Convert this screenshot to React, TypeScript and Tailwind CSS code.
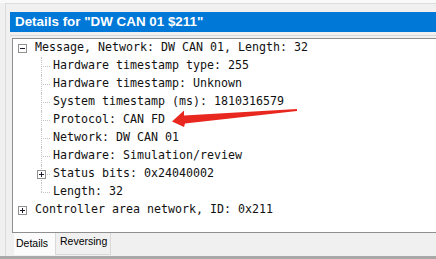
import React from "react";

type Row = {
  text: string;
  level: 0 | 1;
  box?: "minus" | "plus";
  last?: boolean;
};

const rows: Row[] = [
  { text: "Message, Network: DW CAN 01, Length: 32", level: 0, box: "minus" },
  { text: "Hardware timestamp type: 255", level: 1 },
  { text: "Hardware timestamp: Unknown", level: 1 },
  { text: "System timestamp (ms): 1810316579", level: 1 },
  { text: "Protocol: CAN FD", level: 1 },
  { text: "Network: DW CAN 01", level: 1 },
  { text: "Hardware: Simulation/review", level: 1 },
  { text: "Status bits: 0x24040002", level: 1, box: "plus" },
  { text: "Length: 32", level: 1, last: true },
  { text: "Controller area network, ID: 0x211", level: 0, box: "plus" },
];

const ExpandBox = ({ kind }: { kind: "minus" | "plus" }) => (
  <svg width="9" height="9" viewBox="0 0 9 9" className="block">
    <rect x="0.5" y="0.5" width="8" height="8" fill="#fff" stroke="#919191" />
    <line x1="2" y1="4.5" x2="7" y2="4.5" stroke="#1b1b2f" />
    {kind === "plus" && <line x1="4.5" y1="2" x2="4.5" y2="7" stroke="#1b1b2f" />}
  </svg>
);

const TreeRow = ({ row }: { row: Row }) => {
  if (row.level === 0) {
    return (
      <div className="flex h-[18px] items-center pl-[5px]">
        {row.box && <ExpandBox kind={row.box} />}
        <span className="ml-[8px] whitespace-pre">{row.text}</span>
      </div>
    );
  }
  return (
    <div className="flex h-[18px] items-center pl-[24px]">
      {/* connector lines */}
      <div className="relative h-full w-[16px] flex-none">
        <div
          className={`absolute left-[4px] top-0 border-l border-dotted border-[#c4c4c4] ${
            row.last ? "h-[9px]" : "h-[18px]"
          }`}
        />
        <div className="absolute left-[4px] top-[9px] w-[9px] border-t border-dotted border-[#c4c4c4]" />
        {row.box && (
          <div className="absolute left-0 top-[5px]">
            <ExpandBox kind={row.box} />
          </div>
        )}
      </div>
      <span className="whitespace-pre">{row.text}</span>
    </div>
  );
};

export default function App() {
  return (
    <div className="relative flex h-[259px] w-[436px] flex-col overflow-hidden bg-[#f0f0f0]">
      {/* top edge */}
      <div className="h-[3px] bg-[#f9f9f9]" />
      <div className="ml-[5px] h-px bg-[#dcdcdc]" />

      <div className="flex flex-1 flex-col pl-[5px]">
        <div className="flex flex-1 flex-col border-l border-[#dcdcdc]">
          {/* header */}
          <div className="ml-[4px] mt-[8px] flex h-[20px] items-center bg-[#0078d7] pl-[5px]">
            <span className="font-['Liberation_Sans',Arial,sans-serif] text-[13.4px] font-bold text-white">
              Details for "DW CAN 01 $211"
            </span>
          </div>
          <div className="ml-[4px] mt-[3px] h-px bg-[#dadada]" />

          {/* tree */}
          <div className="ml-[6px] mt-[2px] h-[195px] flex-none border-b border-l border-t border-[#8f8f8f] bg-white font-['DejaVu_Sans_Mono',monospace] text-[11.63px] leading-none text-[#111]">
            {rows.map((r, i) => (
              <TreeRow key={i} row={r} />
            ))}
          </div>

          {/* tabs */}
          <div className="flex h-[22px] font-['Liberation_Sans',Arial,sans-serif] text-[10.5px] text-black">
            <div className="ml-[8px] flex w-[41px] items-end bg-[#fbfbfb] pb-[3px] pl-[2px]">Details</div>
            <div className="flex h-[22px] w-[56px] items-center border-x border-b border-[#d9d9d9] bg-[#f0f0f0] pb-[3px] pl-[4px]">
              Reversing
            </div>
          </div>
        </div>
      </div>

      {/* bottom edge */}
      <div className="h-[3px] bg-[#a8a8a8]" />

      {/* annotation arrow */}
      <svg
        className="pointer-events-none absolute left-0 top-0"
        width="436"
        height="259"
        viewBox="0 0 436 259"
      >
        <polygon
          points="172,121.5 184,110.5 184,115.5 297,109 297,111 185,123.5 184,127"
          fill="#e8281e"
        />
      </svg>
    </div>
  );
}
